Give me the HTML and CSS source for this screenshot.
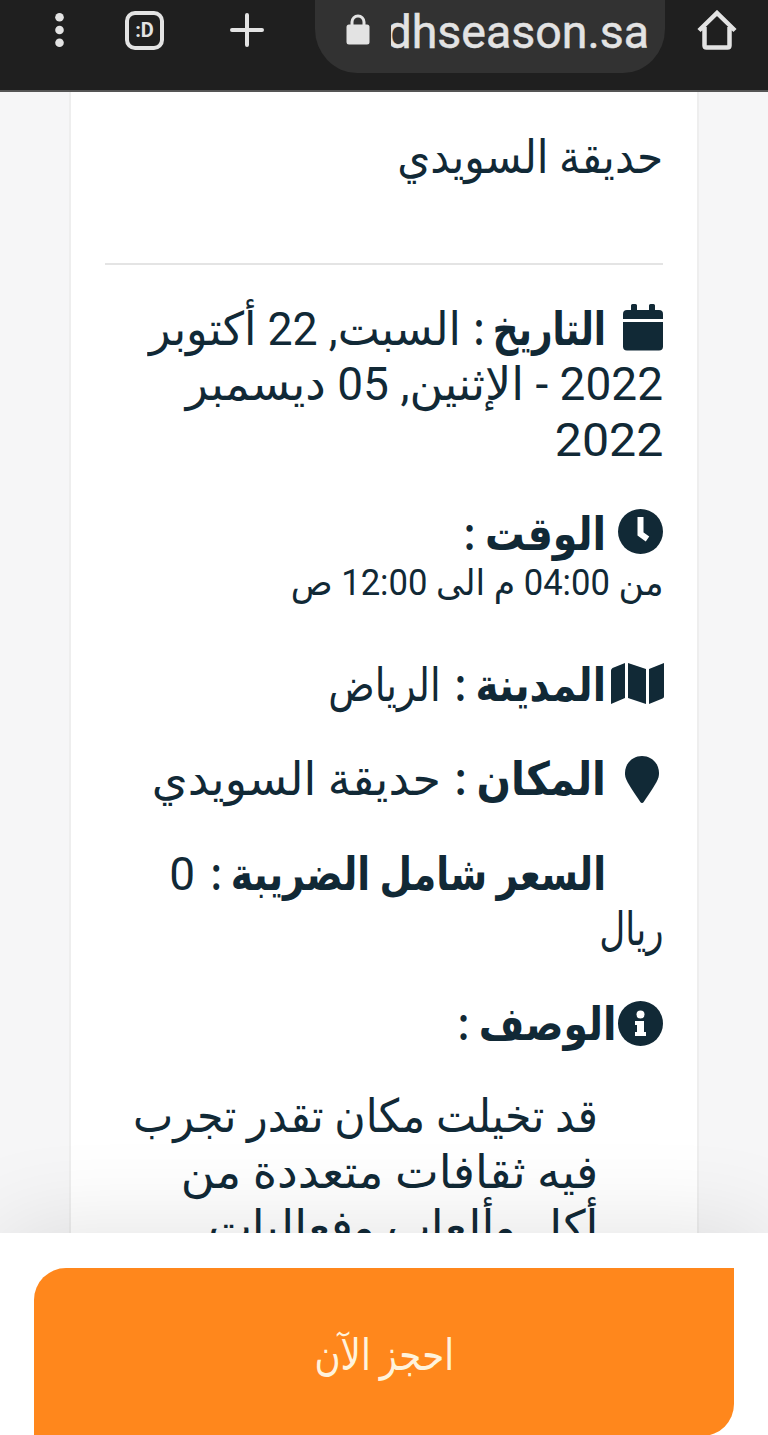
FILE: index.html
```html
<!DOCTYPE html>
<html lang="ar" dir="rtl">

<head>
    <meta charset="utf-8">
    <title>حديقة السويدي</title>
    <link rel="stylesheet" href="styles.css">
</head>

<body>
    <header class="browser-bar">
        <svg class="icon-home" width="40" height="40" viewBox="0 0 40 40"><path d="M2 20.500 20 3l18 17.500M7.500 17v18.500q0 2 2 2h21q2 0 2-2V17" /></svg>
        <div class="address" dir="ltr">
            <svg class="icon-lock" width="24" height="31" viewBox="0 0 24 31"><path d="M6 12V8a6 6 0 0 1 12 0v4" /><rect x=".5" y="10.500" width="23" height="20" rx="2.500" /></svg>
            <div class="url"><span>dhseason.sa</span></div>
        </div>
        <svg class="icon-plus" width="34" height="34" viewBox="0 0 34 34"><path d="M17 2v30M2 17h30" /></svg>
        <div class="tabs" dir="ltr"><span>:D</span></div>
        <svg class="icon-menu" width="9" height="34" viewBox="0 0 9 34"><circle cx="4.500" cy="4.300" r="4.300" /><circle cx="4.500" cy="17" r="4.300" /><circle cx="4.500" cy="29.700" r="4.300" /></svg>
    </header>

    <main>
        <div class="card">
            <div class="line title"><span class="text">حديقة السويدي</span></div>
            <hr>
            <div class="row date">
                <div class="line">
                    <div class="icon"><svg width="40" height="47" viewBox="0 0 40 47"><path d="M0 15v-5q0-4 4-4h4V1.500Q8 0 9.500 0h3Q14 0 14 1.500V6h12V1.500Q26 0 27.500 0h3Q32 0 32 1.500V6h4q4 0 4 4v5zM0 18h40v24.500q0 4-4 4H4q-4 0-4-4z" /></svg></div>
                    <b class="text">التاريخ :</b>
                    <span class="text">السبت, 22 أكتوبر</span>
                </div>
                <div class="line"><span class="text">2022 - الإثنين, 05 ديسمبر</span></div>
                <div class="line year"><span class="text">2022</span></div>
            </div>
            <div class="row time">
                <div class="line">
                    <div class="icon"><svg width="45" height="45" viewBox="0 0 45 45"><circle cx="22.500" cy="22.500" r="22.500" /><path class="cut" d="M22.500 8v17l7 5" /></svg></div>
                    <b class="text">الوقت :</b>
                </div>
                <div class="line small"><span class="text">من 04:00 م الى 12:00 ص</span></div>
            </div>
            <div class="row city">
                <div class="line">
                    <div class="icon"><svg width="53" height="41" viewBox="0 0 53 41"><path d="M0 7.500Q0 6 1.500 5L14 0v35L0 41zM17 0l18 6v35l-18-6zM38 6 53 0v33.500q0 1.500-1.500 2L38 41z" /></svg></div>
                    <b class="text">المدينة :</b>
                    <span class="text">الرياض</span>
                </div>
            </div>
            <div class="row place">
                <div class="line">
                    <div class="icon"><svg width="34" height="47" viewBox="0 0 34 47"><path d="M17 0C7.500 0 0 7.500 0 17c0 6 2 9 15 28.500q2 3 4 0C32 26 34 23 34 17 34 7.500 26.500 0 17 0z" /></svg></div>
                    <b class="text">المكان :</b>
                    <span class="text">حديقة السويدي</span>
                </div>
            </div>
            <div class="row price">
                <div class="line">
                    <div class="icon"></div>
                    <b class="text">السعر شامل الضريبة :</b>
                    <span class="text">0</span>
                </div>
                <div class="line currency"><span class="text">ريال</span></div>
            </div>
            <div class="row about">
                <div class="line">
                    <div class="icon"><svg width="45" height="45" viewBox="0 0 45 45"><circle cx="22.500" cy="22.500" r="22.500" /><path class="hole" d="M17 20h9v11h2v4H17v-4h2v-7h-2z" /><circle class="hole" cx="22.500" cy="13.500" r="4" /></svg></div>
                    <b class="text">الوصف :</b>
                </div>
            </div>
            <div class="row desc">
                <div class="line first"><span class="text">قد تخيلت مكان تقدر تجرب</span></div>
                <div class="line"><span class="text">فيه ثقافات متعددة من</span></div>
                <div class="line"><span class="text">أكل وألعاب وفعاليات</span></div>
            </div>
        </div>
    </main>

    <footer class="booking">
        <button class="book"><span class="text">احجز الآن</span></button>
    </footer>
</body>

</html>
```
FILE: styles.css
```css
* {
    box-sizing: border-box;
}

body {
    margin: 0;
    height: 1435px;
    display: flex;
    flex-direction: column;
    overflow: hidden;
    background: #f6f6f7;
    color: #112936;
    font-family: Roboto, "DejaVu Sans", sans-serif;
}

svg {
    display: block;
    flex: none;
}

/* browser bar */
.browser-bar {
    flex: none;
    height: 92px;
    padding: 0 31px 0 55px;
    display: flex;
    align-items: flex-start;
    background: #1f1f1f;
    border-bottom: 2px solid #555;
}

.browser-bar svg {
    fill: none;
    stroke: #e3e3e3;
    stroke-width: 4;
}

.browser-bar .icon-home {
    margin-top: 10px;
    stroke-width: 4.5;
}

.address {
    width: 350px;
    height: 73px;
    margin-right: 32px;
    padding-left: 31px;
    display: flex;
    background: #323232;
    border-radius: 0 0 42px 42px / 0 0 44px 44px;
}

.browser-bar .icon-lock {
    margin-top: 14px;
    stroke-width: 3;
}

.icon-lock rect {
    fill: #e3e3e3;
    stroke: none;
}

.url {
    width: 258px;
    height: 66px;
    margin-left: 21px;
    display: flex;
    justify-content: flex-end;
    overflow: hidden;
    color: #e3e3e3;
    font-size: 46.5px;
    line-height: 64px;
    -webkit-text-stroke: .5px #e3e3e3;
}

.browser-bar .icon-plus {
    margin: 13px 51px 0 0;
    stroke-linecap: round;
}

.tabs {
    width: 39px;
    height: 39px;
    margin: 11px 66px 0 0;
    border: 4px solid #e3e3e3;
    border-radius: 10px;
    color: #e3e3e3;
    font-size: 20px;
    font-weight: bold;
    line-height: 30px;
    text-align: center;
}

.browser-bar .icon-menu {
    margin: 13px 61px 0 0;
    fill: #e3e3e3;
    stroke: none;
}

/* event card */
main {
    flex: none;
    height: 1141px;
    overflow: hidden;
}

.card {
    width: 630px;
    height: 1300px;
    margin-right: 69px;
    padding: 38px 34px 0;
    background: #fff;
    border: solid #eee;
    border-width: 0 2px;
}

hr {
    height: 2px;
    margin: 77px 0 37px;
    border: 0;
    background: #e4e4e4;
}

.line {
    height: 55.5px;
    display: flex;
    font-size: 46px;
    line-height: 55px;
    white-space: nowrap;
}

.text {
    display: block;
    flex: none;
    transform-origin: right center;
}

.icon {
    width: 57px;
    padding-top: 2px;
    flex: none;
}

.icon svg {
    fill: #112936;
}

.icon .cut {
    fill: none;
    stroke: #fff;
    stroke-width: 6;
}

.icon .hole {
    fill: #fff;
}

.row {
    margin-bottom: 39px;
}

.title .text {
    transform: scaleX(.92);
}

.date b {
    width: 145px;
    transform: scaleX(.775);
}

.date b + .text {
    transform: scaleX(.972);
}

.date .year .text {
    transform: scaleX(1.05);
}

.time b {
    transform: scaleX(.86);
}

.small {
    height: 56px;
    font-size: 36px;
    line-height: 40px;
}

.small .text {
    transform: scaleX(.962);
}

.city .icon {
    padding-top: 5px;
}

.city .icon svg {
    margin-right: -1px;
}

.city b {
    width: 165px;
    transform: scaleX(.845);
}

.city b + .text {
    transform: scaleX(.835);
}

.place .icon {
    padding: 4px 4px 0 0;
}

.place b {
    width: 165px;
    transform: scaleX(.88);
}

.price b {
    width: 411px;
    transform: scaleX(.815);
}

.price .currency .text {
    transform: scaleX(.78);
}

.about .icon {
    width: 46px;
    padding-top: 4px;
}

.about b {
    transform: scaleX(.855);
}

.desc {
    margin-top: -41px;
    padding: 39px 65px 0 0;
}

.desc .text {
    transform: scaleX(1.01);
}

.desc .first .text {
    transform: scaleX(.93);
}

/* bottom booking bar */
.booking {
    position: relative;
    flex: none;
    height: 202px;
    padding: 35px 34px 0;
    background: #fff;
    box-shadow: 0 0 100px rgba(0, 0, 0, .12);
}

.book {
    width: 700px;
    height: 168px;
    padding: 6px 0 0;
    display: flex;
    align-items: center;
    justify-content: center;
    border: 0;
    border-radius: 32px 0 32px 0;
    background: #ff871c;
    color: #fff3dc;
    font-family: inherit;
    font-size: 44px;
}

.book .text {
    transform: scaleX(.81);
    transform-origin: center;
}
```
